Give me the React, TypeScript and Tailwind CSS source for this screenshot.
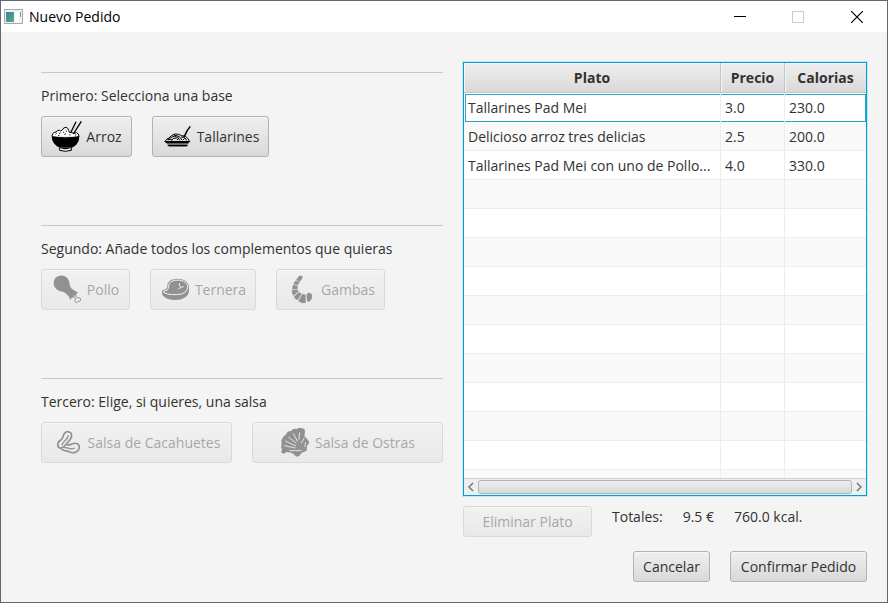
import type { ReactNode } from "react";

function RiceIcon() {
  return (
    <svg className="size-[31px] shrink-0" viewBox="48 33 93 93" fill="none" stroke="#000" strokeWidth="3" aria-hidden="true">
      <path d="M51 78 L53 71 L58 67 L64 66 L68 61 L74 61 L77 63 L82 60 L86 54 L93 52 L98 55 L101 61 L103 67 L110 68 L118 70 L125 68 L130 72 L132 79" fill="#fff" />
      <path d="M61 73l4-3M72 71l5-3M84 66l4 2M92 62l4 3M88 74l5-3M103 74l4 1M120 76l4-2M69 77l4-1" strokeWidth="2.5" />
      <path d="M107 68 L123 35 M115 72 L139 34" strokeWidth="4" />
      <path d="M50 78 Q91 86 133 78 Q133 101 116 110 Q110 114 106 115 L77 115 Q50 104 50 78Z" fill="#000" stroke="none" />
      <path d="M74 113 L74 121 Q91 127 109 121 L109 113" fill="#eee" />
      <path d="M74 114 Q91 121 109 114" fill="#000" stroke="none" />
    </svg>
  );
}

function NoodlesIcon() {
  return (
    <svg className="size-[31px] shrink-0" viewBox="51 33 93 93" fill="none" stroke="#000" strokeWidth="3" aria-hidden="true">
      <path d="M136 49 L127 61 L120 75 L116 81" strokeWidth="4.5" />
      <path d="M61 93 L66 87 L72 84 L79 77 L90 72 L101 73 L110 77 L121 79 L128 85 L133 93" />
      <path d="M70 91 Q75 80 88 79 Q101 79 104 91 M79 91 Q85 83 95 84 M87 76 Q105 76 111 91 M108 81 Q123 81 124 91 M67 87 L82 90 M96 90 L101 84 M114 90 L119 85" strokeWidth="3" />
      <path d="M57 93 H137 L129 99 H64Z" fill="#000" stroke="none" />
      <path d="M62 97 Q67 101 72 101 H122 Q129 101 133 97" strokeWidth="2" />
      <path d="M68 106 H128" strokeWidth="4.5" />
      <path d="M72 109 H124" strokeWidth="1.5" />
    </svg>
  );
}

function ChickenIcon() {
  return (
    <svg className="size-[31px] shrink-0" viewBox="48 42 93 93" fill="none" stroke="#000" aria-hidden="true">
      <path d="M54 65 Q55 54 64 50 Q73 45 84 48 Q96 53 99 65 Q100 76 104 83 Q111 92 125 97 L121 101 L122 106 L115 105 L112 113 L108 111 L103 119 Q101 109 91 101 Q85 95 75 94 Q61 91 55 79 Q53 72 54 65Z" fill="#000" />
      <path d="M111 107 L119 115 Q114 121 118 126 Q123 131 126 124 Q132 126 134 120 Q135 114 128 113 L124 114 L117 106" strokeWidth="3" />
    </svg>
  );
}

function SteakIcon() {
  return (
    <svg className="size-[31px] shrink-0" viewBox="375 42 93 93" aria-hidden="true">
      <path d="M381 93 Q385 88 394 86 Q398 84 397 75 Q399 60 419 57 Q441 54 455 66 Q462 72 462 84 L462 94 Q460 110 441 117 Q421 124 397 116 Q382 109 381 101Z" fill="#000" />
      <path d="M385 96 Q389 91 397 90 Q401 87 401 76 Q403 64 419 61 Q440 58 452 68 Q460 75 458 84 Q455 98 440 102 Q422 105 413 104 Q396 104 385 96Z" fill="none" stroke="#eee" strokeWidth="3" />
      <path d="M433 70 L434 78 L439 82 L446 80 M437 83 L430 86" fill="none" stroke="#eee" strokeWidth="3" />
    </svg>
  );
}

function ShrimpIcon() {
  return (
    <svg className="size-[31px] shrink-0" viewBox="78 42 93 93" fill="#000" stroke="#000" strokeWidth="1" aria-hidden="true">
      <path d="M119 47 L128 49 L124 59 L119 65 L109 60 Q112 52 119 47Z" />
      <path d="M107 62 L118 67 L113 75 L101 73 Q102 67 107 62Z" />
      <path d="M100 75 L113 78 L112 87 L97 88 Q97 81 100 75Z" />
      <path d="M96 91 L113 89 L115 94 L100 107 Q96 100 96 91Z" />
      <path d="M117 97 L124 101 L113 120 Q105 117 102 110Z" />
      <path d="M127 102 L136 104 L137 128 Q124 131 116 123Z" />
      <path d="M140 104 L144 99 Q155 97 156 107 L155 116 Q150 123 145 126 L141 120Z" />
    </svg>
  );
}

function PeanutIcon() {
  return (
    <svg className="size-[31px] shrink-0" viewBox="51 36 93 93" fill="none" stroke="#000" strokeWidth="5" strokeLinejoin="round" aria-hidden="true">
      <path d="M86 55 Q92 47 100 51 Q109 55 106 66 Q104 74 97 80 Q92 84 88 91 Q80 101 71 99 Q63 95 66 85 Q68 78 77 73 Q81 68 82 61Z" />
      <path d="M97 60 Q97 68 89 75 Q80 83 77 91" strokeWidth="4" />
      <path d="M92 89 Q101 91 108 87 Q124 81 129 91 Q133 104 120 111 Q111 115 103 112 Q96 107 86 107 Q78 105 74 100" />
      <path d="M84 98 Q92 97 99 100 Q108 103 117 99" strokeWidth="4" />
    </svg>
  );
}

function ShellIcon() {
  return (
    <svg className="size-[31px] shrink-0" viewBox="105 36 93 93" aria-hidden="true">
      <path d="M139 47 Q145 39 155 42 Q163 36 171 40 Q180 40 180 50 L178 63 L183 69 Q193 76 192 84 L186 93 L185 107 L174 112 Q167 115 164 122 L154 125 L146 118 L139 113 L123 111 L119 116 L109 113 L111 101 L108 98 L110 87 L109 75 L115 65 L123 58 L128 50Z" fill="#000" />
      <path d="M164 52 L162 74 M145 56 L158 80 M130 66 L154 85 M121 78 L153 93 M118 92 L151 99 M178 69 L168 85 M182 82 L179 96 M133 107 L170 107" fill="none" stroke="#eee" strokeWidth="2.5" />
    </svg>
  );
}

type FxButtonProps = {
  children: ReactNode;
  icon?: ReactNode;
  disabled?: boolean;
  className?: string;
};

function FxButton({ children, icon, disabled, className = "" }: FxButtonProps) {
  return (
    <button
      type="button"
      disabled={disabled}
      className={`flex items-center justify-center gap-1 whitespace-nowrap rounded-[3px] border border-[#b2b2b2] bg-linear-to-b from-[#efefef] to-[#d9d9d9] shadow-[inset_0_1px_0_#f8f8f8] disabled:opacity-40 ${className}`}
    >
      {icon}
      {children}
    </button>
  );
}

function Step({ title, children }: { title: string; children: ReactNode }) {
  return (
    <section className="border-t border-[#c8c8c8] pt-3 pb-[68px]">
      <h2 className="leading-[21px]">{title}</h2>
      <div className="mt-2.5 flex gap-5">{children}</div>
    </section>
  );
}

const dishes = [
  ["Tallarines Pad Mei", "3.0", "230.0"],
  ["Delicioso arroz tres delicias", "2.5", "200.0"],
  ["Tallarines Pad Mei con uno de Pollo...", "4.0", "330.0"],
];
const emptyRows = Array.from({ length: 11 }, () => ["", "", ""]);

const headCell = "border-r border-b border-[#c4c4c4] bg-linear-to-b from-[#efefef] to-[#d9d9d9] p-0 text-center font-bold shadow-[inset_1px_1px_0_#f6f6f6] last:border-r-0";

function DishTable() {
  return (
    <div className="flex min-h-0 flex-1 flex-col border border-[#039ed3] bg-white shadow-[0_0_0_1px_#c4e6f2]">
      <div className="min-h-0 flex-1 overflow-hidden">
        <table className="w-full table-fixed border-separate border-spacing-0">
          <colgroup>
            <col />
            <col className="w-16" />
            <col className="w-[81px]" />
          </colgroup>
          <thead>
            <tr className="h-[30px]">
              <th scope="col" className={headCell}>Plato</th>
              <th scope="col" className={headCell}>Precio</th>
              <th scope="col" className={headCell}>Calorias</th>
            </tr>
          </thead>
          <tbody>
            {[...dishes, ...emptyRows].map((row, r) => (
              <tr key={r} className="h-[29px] odd:bg-white even:bg-[#f9f9f9]">
                {row.map((value, c) =>
                  r === 0 ? (
                    <td key={c} className="group border-r border-[#ededed] p-0 pt-px last:border-r-0">
                      <div className="h-7 border-y border-[#2ba6cb] px-1 leading-[26px] group-first:ml-px group-first:border-l group-first:pl-[2px] group-last:border-r">
                        {value}
                      </div>
                    </td>
                  ) : (
                    <td key={c} className="whitespace-nowrap border-r border-b border-[#ededed] px-1 pt-px pb-0 leading-[27px] last:border-r-0">
                      {value}
                    </td>
                  ),
                )}
              </tr>
            ))}
          </tbody>
        </table>
      </div>
      <div className="flex h-[17px] shrink-0 items-center border-t border-[#d0d0d0] bg-[#eeeeee]">
        <button type="button" aria-label="Desplazar a la izquierda" className="flex w-3.5 justify-center">
          <svg width="6" height="10" viewBox="0 0 6 10" fill="none" stroke="#777" strokeWidth="1.5"><path d="M5 1 L1 5 L5 9" /></svg>
        </button>
        <div className="h-3.5 flex-1 rounded-[3px] border border-[#b2b2b2] bg-linear-to-b from-[#efefef] to-[#d9d9d9]" />
        <button type="button" aria-label="Desplazar a la derecha" className="flex w-3.5 justify-center">
          <svg width="6" height="10" viewBox="0 0 6 10" fill="none" stroke="#777" strokeWidth="1.5"><path d="M1 1 L5 5 L1 9" /></svg>
        </button>
      </div>
    </div>
  );
}

export default function App() {
  return (
    <div className="flex h-screen flex-col border border-[#5f6875] bg-[#f4f4f4] font-['Open_Sans','Noto_Sans',sans-serif] text-sm text-[#323232]">
      <header className="flex h-[31px] shrink-0 items-center bg-white pl-[3px] text-black">
        <svg width="19" height="15" viewBox="0 0 19 15" aria-hidden="true">
          <defs>
            <linearGradient id="pane" x1="0" y1="0" x2="1" y2="1">
              <stop offset="0" stopColor="#3f7fa0" />
              <stop offset="1" stopColor="#55b07c" />
            </linearGradient>
          </defs>
          <rect x="0.5" y="0.5" width="18" height="14" fill="#f2f2f2" stroke="#a4aab0" />
          <rect x="2" y="3" width="8" height="10" fill="url(#pane)" />
          <rect x="11" y="3" width="4" height="10" fill="#fff" />
          <rect x="16" y="3" width="1" height="5" fill="#5b9fa8" />
        </svg>
        <h1 className="ml-1.5 flex-1">Nuevo Pedido</h1>
        <button type="button" aria-label="Minimizar" className="flex h-full w-[58px] items-center justify-center">
          <svg width="12" height="12" viewBox="0 0 12 12"><path d="M0 5.5H12" stroke="#000" /></svg>
        </button>
        <button type="button" aria-label="Maximizar" disabled className="flex h-full w-[58px] items-center justify-center">
          <svg width="12" height="12" viewBox="0 0 12 12"><rect x="0.5" y="0.5" width="11" height="11" fill="none" stroke="#ccc" /></svg>
        </button>
        <button type="button" aria-label="Cerrar" className="flex h-full w-[60px] items-center justify-center">
          <svg width="12" height="12" viewBox="0 0 12 12"><path d="M0 0L12 12M12 0L0 12" stroke="#000" strokeWidth="1.2" /></svg>
        </button>
      </header>

      <main className="grid min-h-0 flex-1 grid-cols-[402fr_404fr] gap-5 pr-5 pl-10">
        <div className="pt-10">
          <Step title="Primero: Selecciona una base">
            <FxButton className="h-[41px] w-[91px]" icon={<RiceIcon />}>Arroz</FxButton>
            <FxButton className="h-[41px] w-[117px]" icon={<NoodlesIcon />}>Tallarines</FxButton>
          </Step>
          <Step title="Segundo: Añade todos los complementos que quieras">
            <FxButton disabled className="h-[41px] w-[89px]" icon={<ChickenIcon />}>Pollo</FxButton>
            <FxButton disabled className="h-[41px] w-[106px]" icon={<SteakIcon />}>Ternera</FxButton>
            <FxButton disabled className="h-[41px] w-[109px]" icon={<ShrimpIcon />}>Gambas</FxButton>
          </Step>
          <Step title="Tercero: Elige, si quieres, una salsa">
            <FxButton disabled className="h-[41px] flex-1" icon={<PeanutIcon />}>Salsa de Cacahuetes</FxButton>
            <FxButton disabled className="h-[41px] flex-1" icon={<ShellIcon />}>Salsa de Ostras</FxButton>
          </Step>
        </div>

        <div className="flex min-h-0 min-w-0 flex-col pt-[30px] pb-5">
          <DishTable />
          <div className="mt-2.5 flex items-start gap-5">
            <FxButton disabled className="h-[31px] w-[129px]">Eliminar Plato</FxButton>
            <span className="leading-[22px]">Totales:</span>
            <span className="leading-[22px]">9.5 €</span>
            <span className="leading-[22px]">760.0 kcal.</span>
          </div>
          <div className="mt-3.5 flex justify-end gap-5">
            <FxButton className="h-[31px] w-[77px]">Cancelar</FxButton>
            <FxButton className="h-[31px] w-[137px]">Confirmar Pedido</FxButton>
          </div>
        </div>
      </main>
    </div>
  );
}
